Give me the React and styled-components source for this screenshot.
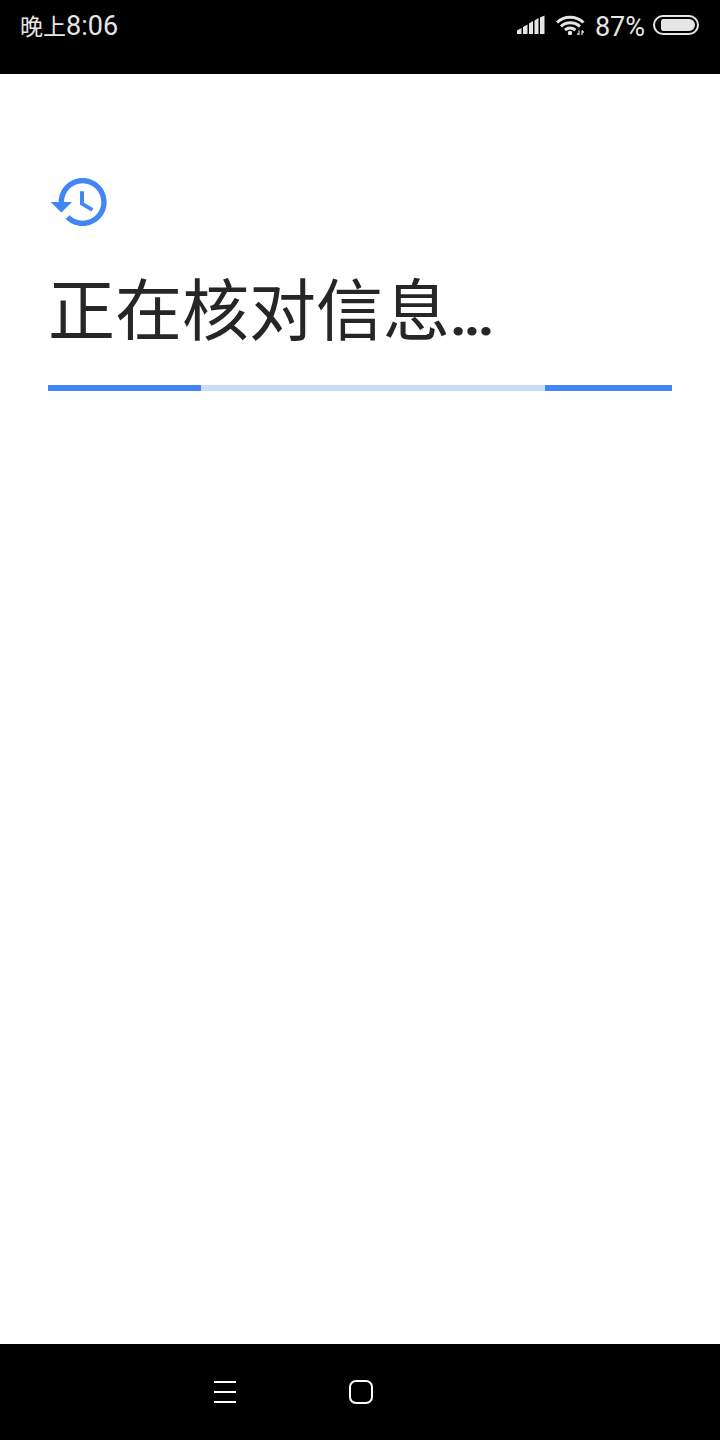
import React from "react";
import styled, { createGlobalStyle } from "styled-components";

const Global = createGlobalStyle`
  html, body { margin: 0; padding: 0; background: #fff; }
  #root { width: 720px; height: 1440px; }
`;

const Screen = styled.div`
  width: 720px;
  height: 1440px;
  display: flex;
  flex-direction: column;
  background: #fff;
  font-family: "Roboto", "Noto Sans CJK SC", sans-serif;
  overflow: hidden;
`;

const StatusBar = styled.header`
  height: 74px;
  flex: none;
  background: #000;
  color: #e6e6e6;
  display: flex;
  justify-content: space-between;
  align-items: flex-start;
  padding: 10px 21px 0 20px;
  box-sizing: border-box;
`;

const Clock = styled.span`
  font-size: 27px;
  line-height: 32px;
  white-space: nowrap;
`;

const ClockCjk = styled.span`
  font-size: 23px;
`;

const StatusRight = styled.div`
  display: flex;
  align-items: center;
  height: 30px;
`;

const Percent = styled.span`
  font-size: 27px;
  line-height: 30px;
  margin: 3px 8px 0 10px;
`;

const Icon = styled.svg`
  display: block;
  flex: none;
`;

const WifiIcon = styled(Icon)`
  margin-left: 11px;
`;

const Main = styled.main`
  flex: 1;
  padding: 96px 48px 0;
  display: flex;
  flex-direction: column;
`;

const Title = styled.h1`
  margin: 34px 0 0;
  height: 88px;
  font-size: 67px;
  line-height: 88px;
  font-weight: 400;
  color: #262626;
  white-space: nowrap;
`;

const Dots = styled.span`
  font-size: 58px;
  font-weight: 700;
  line-height: 0;
  letter-spacing: -3px;
`;

const Progress = styled.div`
  margin-top: 29px;
  height: 6px;
  background: #c9dcf8;
  display: flex;
  justify-content: space-between;
`;

const Segment = styled.div`
  height: 100%;
  background: #4285f4;
  width: ${(p) => p.$w}px;
`;

const NavBar = styled.nav`
  height: 96px;
  flex: none;
  background: #000;
  display: flex;
  align-items: center;
  padding-left: 214px;
  gap: 113px;
  box-sizing: border-box;
`;

const Menu = styled.div`
  width: 22px;
  height: 22px;
  display: flex;
  flex-direction: column;
  justify-content: space-between;
`;

const MenuLine = styled.span`
  height: 2px;
  background: #fff;
`;

const Home = styled.div`
  width: 20px;
  height: 20px;
  border: 2px solid #fff;
  border-radius: 7px;
`;

export default function App() {
  return (
    <Screen>
      <Global />
      <StatusBar>
        <Clock>
          <ClockCjk>晚上</ClockCjk>8:06
        </Clock>
        <StatusRight>
          <Icon width="28" height="20" viewBox="0 0 28 20" fill="#e6e6e6">
            <polygon points="0,15.5 4.5,13 4.5,19 0,19" />
            <polygon points="6,12 10.5,9.5 10.5,19 6,19" />
            <polygon points="12,8.5 16,6 16,19 12,19" />
            <polygon points="17.5,5.5 21.5,3 21.5,19 17.5,19" />
            <polygon points="23,2.5 27.5,0.5 27.5,19 23,19" />
          </Icon>
          <WifiIcon width="29" height="20" viewBox="0 0 29 20" fill="none">
            <g stroke="#e6e6e6" strokeWidth="3">
              <path d="M1 7.5 C8 0.5 20 0.5 27.5 7.5" />
              <path d="M5 11.5 C10 6.5 18.5 6.5 24 11.5" />
              <path d="M9 15 C12 12.5 16 12.5 19.5 15" />
            </g>
            <circle cx="14" cy="18" r="2.2" fill="#e6e6e6" />
            <path d="M23 15.5v5M23 20.5l-1.8-2M26 20.5v-5M26 15.5l1.8 2" stroke="#cfcfcf" strokeWidth="1.3" />
          </WifiIcon>
          <Percent>87%</Percent>
          <Icon width="46" height="20" viewBox="0 0 46 20" fill="none">
            <rect x="1" y="1" width="44" height="18" rx="9" stroke="#e6e6e6" strokeWidth="2" />
            <path d="M10 4 H36 a6 6 0 0 1 0 12 H10 a2.5 2.5 0 0 1 -2 -2.5 V6.5 A2.5 2.5 0 0 1 10 4 Z" fill="#e6e6e6" />
          </Icon>
        </StatusRight>
      </StatusBar>
      <Main>
        <Icon width="64" height="64" viewBox="0 0 24 24" fill="#4285f4">
          <path d="M13 3c-4.97 0-9 4.03-9 9H1l3.89 3.89.07.14L9 12H6c0-3.87 3.13-7 7-7s7 3.13 7 7-3.13 7-7 7c-1.93 0-3.68-.79-4.94-2.06l-1.42 1.42C8.27 19.99 10.51 21 13 21c4.97 0 9-4.03 9-9s-4.03-9-9-9zm-1 5v5l4.28 2.54.72-1.21-3.5-2.08V8H12z" />
        </Icon>
        <Title>
          正在核对信息<Dots>...</Dots>
        </Title>
        <Progress>
          <Segment $w={153} />
          <Segment $w={127} />
        </Progress>
      </Main>
      <NavBar>
        <Menu>
          <MenuLine />
          <MenuLine />
          <MenuLine />
        </Menu>
        <Home />
      </NavBar>
    </Screen>
  );
}
